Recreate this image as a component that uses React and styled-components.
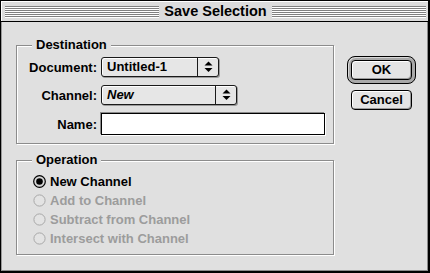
import React from "react";
import styled, { createGlobalStyle } from "styled-components";

const Global = createGlobalStyle`
  html, body { margin: 0; padding: 0; background: #e0e0e0; }
  body { font-family: "Liberation Sans", Arial, sans-serif; }
  * { box-sizing: border-box; }
`;

const Window = styled.div`
  width: 430px;
  height: 273px;
  display: flex;
  flex-direction: column;
  border: 1px solid #000;
  border-right-width: 2px;
  border-bottom-width: 2px;
  background: #e0e0e0;
  font: bold 13px "Liberation Sans", Arial, sans-serif;
  color: #000;
`;

const TitleBar = styled.div`
  height: 21px;
  flex: none;
  display: flex;
  align-items: center;
  padding: 0 2px 0 4px;
  background: #dcdcdc;
  border-bottom: 1px solid #000;
  box-shadow: inset 1px 1px 0 #fff;
`;

const Stripes = styled.div`
  flex: 1;
  height: 12px;
  margin-top: 1px;
  background: repeating-linear-gradient(to bottom, #808080 0 1px, #ffffff 1px 2px);
`;

const Title = styled.div`
  padding: 0 5px;
  font-size: 14.5px;
  line-height: 17px;
`;

const Content = styled.div`
  flex: 1;
  display: flex;
  gap: 11px;
  padding: 23px 0 0 14px;
  border-left: 1px solid #9a9a9a;
  border-right: 1px solid #8a8a8a;
  border-bottom: 1px solid #8a8a8a;
`;

const Main = styled.div`
  width: 320px;
  display: flex;
  flex-direction: column;
  gap: 16px;
`;

const Group = styled.div`
  position: relative;
  border: 1px solid #8c8c8c;
  box-shadow: 1px 1px 0 #fff, inset 1px 1px 0 #fff;
  width: 318px;
  padding: ${(p) => p.$pad};
`;

const Legend = styled.span`
  position: absolute;
  left: 15px;
  top: -9px;
  padding: 0 4px;
  background: #e0e0e0;
  line-height: 16px;
`;

const FormGrid = styled.div`
  display: grid;
  grid-template-columns: 80px auto;
  column-gap: 4px;
  row-gap: 8px;
  align-items: center;
  justify-items: start;
`;

const Label = styled.label`
  justify-self: end;
`;

const Popup = styled.div`
  width: ${(p) => p.$w}px;
  height: 20px;
  display: flex;
  border: 1px solid #1a1a1a;
  border-radius: 3px;
  background: #e6e6e6;
  box-shadow: inset 1px 1px 0 #fff, 1px 1px 0 #9a9a9a;
`;

const PopupText = styled.span`
  flex: 1;
  padding-left: 5px;
  line-height: 18px;
  font-style: ${(p) => (p.$italic ? "italic" : "normal")};
`;

const PopupArrow = styled.span`
  width: 21px;
  display: flex;
  align-items: center;
  justify-content: center;
  border-left: 1px solid #1a1a1a;
`;

const TextField = styled.input`
  width: 224px;
  height: 22px;
  border: 1px solid #000;
  background: #fff;
  box-shadow: -1px -1px 0 #8a8a8a, 1px 1px 0 #fff;
  outline: none;
  padding: 0 3px;
  font: inherit;
`;

const RadioList = styled.div`
  display: flex;
  flex-direction: column;
`;

const RadioRow = styled.div`
  height: 19px;
  display: flex;
  align-items: center;
  gap: 4px;
  color: ${(p) => (p.$disabled ? "#9c9c9c" : "#000")};
`;

const Side = styled.div`
  display: flex;
  flex-direction: column;
  align-items: flex-start;
  gap: 6px;
  padding-top: 11px;
`;

const DefaultRing = styled.div`
  padding: 3px;
  border: 1px solid #000;
  border-radius: 8px;
  background: #a8a8a8;
  box-shadow: inset 1px 1px 0 #d8d8d8;
`;

const Button = styled.button`
  width: 61px;
  height: 20px;
  margin-left: ${(p) => (p.$inRing ? 0 : 4)}px;
  border: 1px solid #000;
  border-radius: 4px;
  background: #e4e4e4;
  box-shadow: inset 1px 1px 0 #fff, inset -1px -1px 0 #9c9c9c;
  font: inherit;
  color: #000;
  padding: 0;
  line-height: 18px;
`;

const Arrows = () => (
  <svg width="9" height="12" viewBox="0 0 9 12">
    <path d="M4.5 0.5 L8.5 4.5 L0.5 4.5 Z" fill="#000" />
    <path d="M0.5 7 L8.5 7 L4.5 11 Z" fill="#000" />
  </svg>
);

const Radio = ({ checked, disabled }) => (
  <svg width="13" height="13" viewBox="0 0 13 13">
    {checked ? (
      <>
        <circle cx="6.5" cy="6.5" r="5.8" fill="#d8d8d8" stroke="#000" strokeWidth="1.2" />
        <circle cx="6.5" cy="6.5" r="3.3" fill="#000" />
      </>
    ) : (
      <circle cx="6.5" cy="6.5" r="5.6" fill={disabled ? "#e3e3e3" : "#fff"} stroke={disabled ? "#a8a8a8" : "#000"} strokeWidth="1" />
    )}
  </svg>
);

const ops = [
  { label: "New Channel", checked: true },
  { label: "Add to Channel", disabled: true },
  { label: "Subtract from Channel", disabled: true },
  { label: "Intersect with Channel", disabled: true },
];

export default function App() {
  return (
    <>
      <Global />
      <Window>
        <TitleBar>
          <Stripes />
          <Title>Save Selection</Title>
          <Stripes />
        </TitleBar>
        <Content>
          <Main>
            <Group $pad="11px 0 8px 0">
              <Legend>Destination</Legend>
              <FormGrid>
                <Label>Document:</Label>
                <Popup $w={118}>
                  <PopupText>Untitled-1</PopupText>
                  <PopupArrow><Arrows /></PopupArrow>
                </Popup>
                <Label>Channel:</Label>
                <Popup $w={136}>
                  <PopupText $italic>New</PopupText>
                  <PopupArrow><Arrows /></PopupArrow>
                </Popup>
                <Label>Name:</Label>
                <TextField defaultValue="" />
              </FormGrid>
            </Group>
            <Group $pad="11px 0 6px 16px">
              <Legend>Operation</Legend>
              <RadioList>
                {ops.map((o) => (
                  <RadioRow key={o.label} $disabled={o.disabled}>
                    <Radio checked={o.checked} disabled={o.disabled} />
                    <span>{o.label}</span>
                  </RadioRow>
                ))}
              </RadioList>
            </Group>
          </Main>
          <Side>
            <DefaultRing>
              <Button $inRing>OK</Button>
            </DefaultRing>
            <Button>Cancel</Button>
          </Side>
        </Content>
      </Window>
    </>
  );
}
